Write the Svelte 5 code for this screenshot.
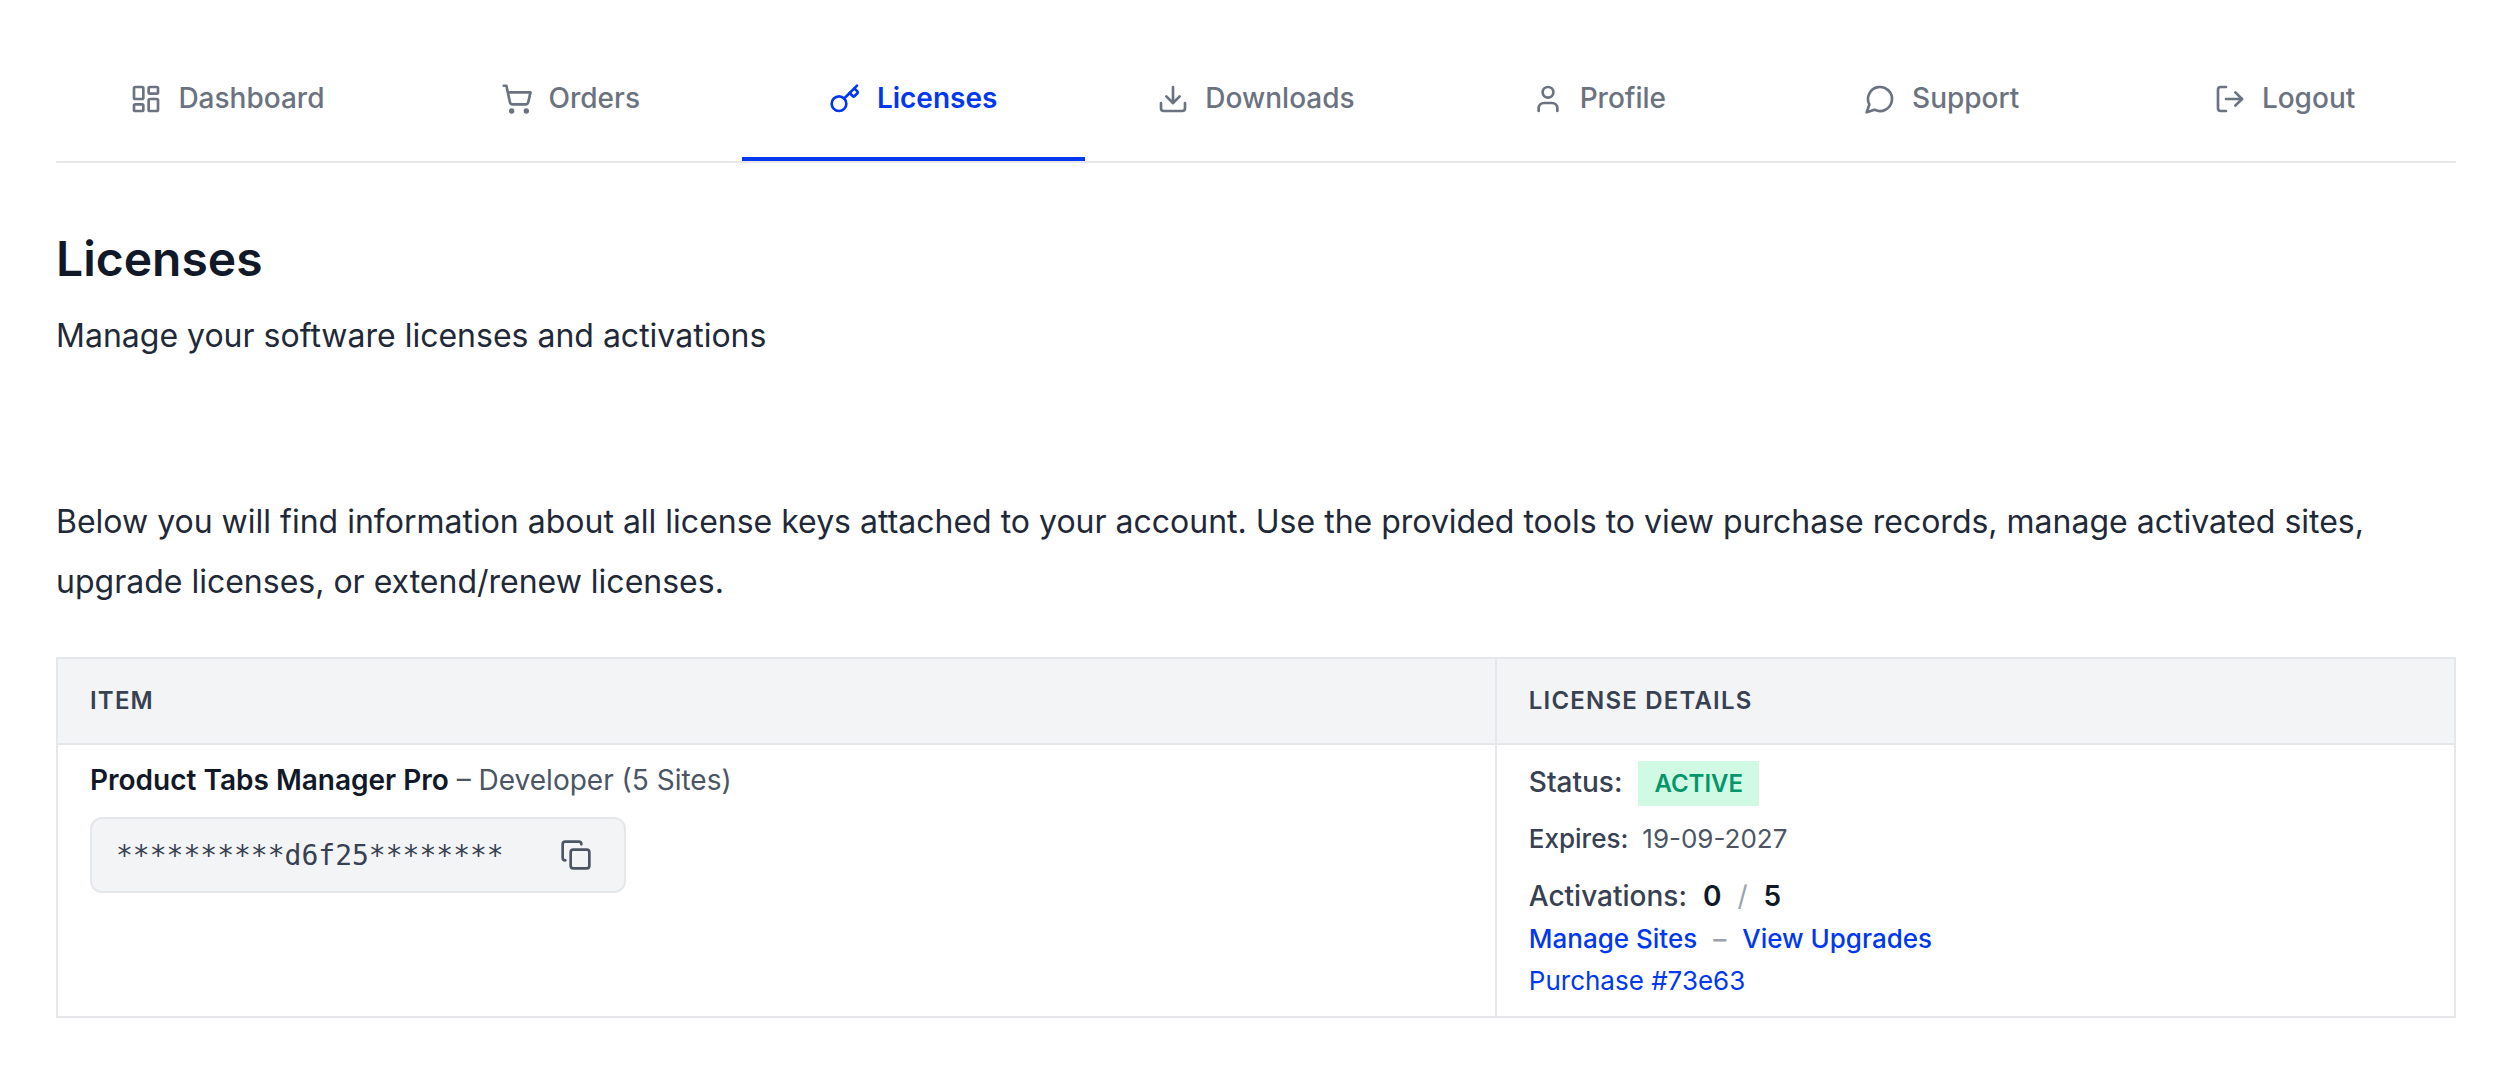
<script>
  const tabs = [
    { id: 'dashboard', label: 'Dashboard' },
    { id: 'orders', label: 'Orders' },
    { id: 'licenses', label: 'Licenses' },
    { id: 'downloads', label: 'Downloads' },
    { id: 'profile', label: 'Profile' },
    { id: 'support', label: 'Support' },
    { id: 'logout', label: 'Logout' }
  ];
  const active = 'licenses';
  let copied = $state(false);
</script>

<main class="page">
  <nav class="tabs" aria-label="Account">
    {#each tabs as tab (tab.id)}
      <a class="tab" class:active={tab.id === active} href="#{tab.id}" aria-current={tab.id === active ? 'page' : undefined}>
        <svg class="icon" viewBox="0 0 24 24" aria-hidden="true">
          {#if tab.id === 'dashboard'}
            <rect x="3" y="3" width="7" height="9" rx="1" />
            <rect x="14" y="3" width="7" height="5" rx="1" />
            <rect x="14" y="12" width="7" height="9" rx="1" />
            <rect x="3" y="16" width="7" height="5" rx="1" />
          {:else if tab.id === 'orders'}
            <circle cx="8" cy="21" r="1" />
            <circle cx="19" cy="21" r="1" />
            <path d="M2.05 2.05h2l2.66 12.42a2 2 0 0 0 2 1.58h9.78a2 2 0 0 0 1.95-1.57l1.65-7.43H5.12" />
          {:else if tab.id === 'licenses'}
            <path d="m15.5 7.5 2.3 2.3a1 1 0 0 0 1.4 0l2.1-2.1a1 1 0 0 0 0-1.4L19 4" />
            <path d="m21 2-9.6 9.6" />
            <circle cx="7.5" cy="15.5" r="5.5" />
          {:else if tab.id === 'downloads'}
            <path d="M21 15v4a2 2 0 0 1-2 2H5a2 2 0 0 1-2-2v-4" />
            <path d="m7 10 5 5 5-5" />
            <path d="M12 15V3" />
          {:else if tab.id === 'profile'}
            <path d="M19 21v-2a4 4 0 0 0-4-4H9a4 4 0 0 0-4 4v2" />
            <circle cx="12" cy="7" r="4" />
          {:else if tab.id === 'support'}
            <path d="M7.9 20A9 9 0 1 0 4 16.1L2 22Z" />
          {:else}
            <path d="M9 21H5a2 2 0 0 1-2-2V5a2 2 0 0 1 2-2h4" />
            <path d="m16 17 5-5-5-5" />
            <path d="M21 12H9" />
          {/if}
        </svg>
        <span>{tab.label}</span>
      </a>
    {/each}
  </nav>

  <header class="heading">
    <h1>Licenses</h1>
    <p>Manage your software licenses and activations</p>
  </header>

  <p class="intro">
    Below you will find information about all license keys attached to your account. Use the provided tools to view purchase records, manage activated sites, upgrade licenses, or extend/renew licenses.
  </p>

  <table class="licenses">
    <thead>
      <tr>
        <th class="item" scope="col">Item</th>
        <th scope="col">License Details</th>
      </tr>
    </thead>
    <tbody>
      <tr>
        <td>
          <div class="product"><strong>Product Tabs Manager Pro</strong> – Developer (5 Sites)</div>
          <div class="key">
            <code>**********d6f25********</code>
            <button class="copy" type="button" aria-label={copied ? 'Copied' : 'Copy license key'} onclick={() => (copied = true)}>
              <svg class="icon" viewBox="0 0 24 24" aria-hidden="true">
                <rect x="8" y="8" width="14" height="14" rx="2" />
                <path d="M4 16c-1.1 0-2-.9-2-2V4c0-1.1.9-2 2-2h10c1.1 0 2 .9 2 2" />
              </svg>
            </button>
          </div>
        </td>
        <td>
          <div class="detail status"><span class="label">Status:</span><span class="badge">Active</span></div>
          <div class="detail expires"><span class="label">Expires:</span><span>19-09-2027</span></div>
          <div class="detail activations">
            <span class="label">Activations:</span>
            <span class="count"><b>0</b><i>/</i><b>5</b></span>
          </div>
          <div class="links"><a href="#sites">Manage Sites</a><span>–</span><a href="#upgrades">View Upgrades</a></div>
          <div class="purchase"><a href="#purchase">Purchase #73e63</a></div>
        </td>
      </tr>
    </tbody>
  </table>
</main>

<style>
  :global(body) {
    margin: 0;
    background: #fff;
  }
  .page {
    padding: 36px 58px 56px 56px;
    font-family: Inter, sans-serif;
    font-size: 28px;
    color: #1f2937;
  }
  a {
    color: #0038f0;
    text-decoration: none;
  }
  .tabs {
    display: grid;
    grid-template-columns: repeat(7, 1fr);
    border-bottom: 2px solid #e5e7eb;
  }
  .tab {
    display: flex;
    align-items: center;
    justify-content: center;
    gap: 16px;
    padding: 41px 0 37px;
    border-bottom: 4px solid transparent;
    font-weight: 500;
    line-height: 43px;
    color: #6b7280;
  }
  .tab.active {
    border-color: #0038f0;
    color: #0038f0;
    font-weight: 600;
  }
  .icon {
    display: block;
    width: 32px;
    height: 32px;
    fill: none;
    stroke: currentColor;
    stroke-width: 2;
    stroke-linecap: round;
    stroke-linejoin: round;
  }
  h1 {
    margin: 64px 0 16px;
    font-size: 48px;
    font-weight: 600;
    line-height: 63px;
    color: #111827;
  }
  .heading p,
  .intro {
    margin: 0;
    font-size: 32px;
    line-height: 60px;
  }
  .intro {
    margin: 126px 0 45px;
  }
  .licenses {
    width: 100%;
    border-collapse: collapse;
  }
  th,
  td {
    box-sizing: border-box;
    border: 2px solid #e5e7eb;
    text-align: left;
    vertical-align: top;
  }
  th {
    padding: 24px 32px;
    background: #f3f4f6;
    font-size: 24px;
    font-weight: 600;
    line-height: 36px;
    letter-spacing: 0.05em;
    text-transform: uppercase;
    color: #374151;
  }
  .item {
    width: 60%;
  }
  td {
    padding: 16px 32px 14px;
    color: #4b5563;
  }
  .product {
    line-height: 38px;
  }
  .product strong {
    font-weight: 600;
    color: #111827;
  }
  .key {
    display: inline-flex;
    align-items: center;
    gap: 48px;
    margin-top: 18px;
    padding: 12px 24px;
    border: 2px solid #e5e7eb;
    border-radius: 12px;
    background: #f3f4f6;
  }
  code {
    font-family: "DejaVu Sans Mono", monospace;
    font-size: 28px;
    color: #374151;
  }
  .copy {
    padding: 8px;
    border: 0;
    background: none;
    color: #4b5563;
  }
  .detail {
    display: flex;
    align-items: baseline;
    gap: 16px;
  }
  .label {
    font-weight: 500;
    color: #374151;
  }
  .badge {
    padding: 4px 16px;
    background: #d1fae5;
    font-size: 24px;
    font-weight: 600;
    line-height: 37px;
    text-transform: uppercase;
    color: #059669;
  }
  .expires {
    gap: 14px;
    margin-top: 12px;
    font-size: 26px;
    line-height: 42px;
  }
  .activations {
    margin-top: 14px;
    line-height: 44px;
  }
  .count {
    display: flex;
    gap: 16px;
  }
  .count b {
    font-weight: 600;
    color: #111827;
  }
  .count i {
    font-style: normal;
    color: #9ca3af;
  }
  .links {
    display: flex;
    gap: 16px;
    font-size: 26px;
    font-weight: 500;
    line-height: 42px;
    color: #9ca3af;
  }
  .purchase {
    font-size: 26px;
    line-height: 42px;
  }
</style>
